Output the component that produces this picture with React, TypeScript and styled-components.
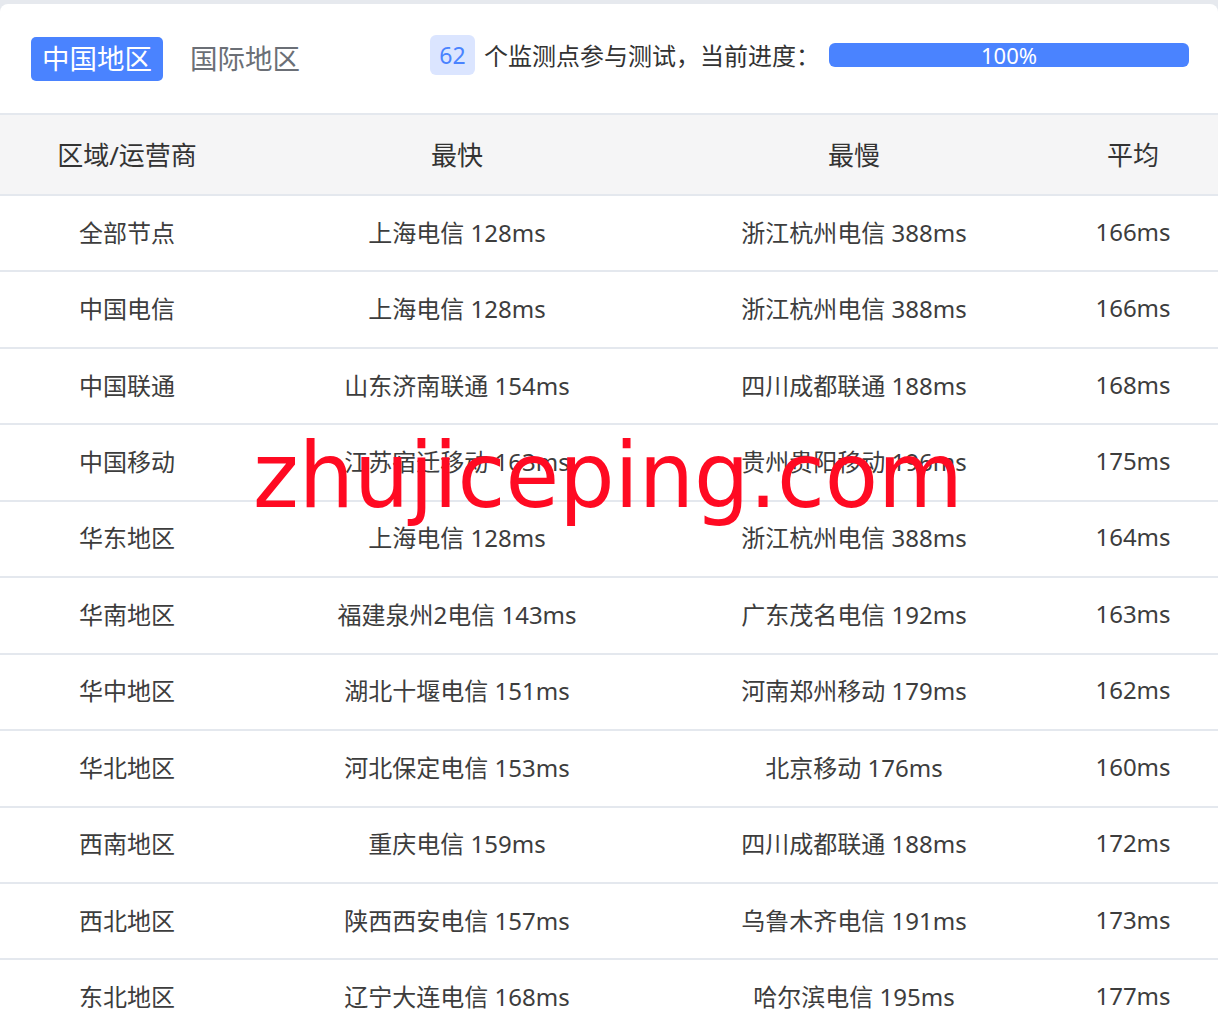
import React from "react";
import styled, { createGlobalStyle } from "styled-components";

const Global = createGlobalStyle`
  html, body { margin: 0; padding: 0; background: #e6e9ee; }
  body { font-family: "Noto Sans", "Noto Sans CJK SC", sans-serif; color: #333; }
`;

const Card = styled.div`
  position: relative;
  margin-top: 4px;
  background: #fff;
  border-radius: 8px 8px 0 0;
  overflow: hidden;
  height: 1027px;
`;

const TopBar = styled.div`
  display: flex;
  align-items: center;
  padding: 0 29px 0 31px;
  border-bottom: 2px solid #e4e8ee;
  box-sizing: border-box;
  height: 111px;
`;

const Tabs = styled.div`
  display: flex;
  align-items: center;
  gap: 16px;
`;

const Tab = styled.div<{ $active?: boolean }>`
  height: 44px;
  padding: 0 11px;
  border-radius: 5px;
  display: flex;
  align-items: center;
  font-size: 27.5px;
  line-height: 1;
  background: ${(p) => (p.$active ? "#4a83ff" : "transparent")};
  color: ${(p) => (p.$active ? "#fff" : "#6b6f76")};
`;

const Progress = styled.div`
  margin-left: auto;
  display: flex;
  align-items: center;
  margin-top: -8px;
`;

const Badge = styled.span`
  display: inline-flex;
  align-items: center;
  justify-content: center;
  width: 45px;
  height: 40px;
  border-radius: 6px;
  background: #dbe5ff;
  color: #4a83ff;
  font-size: 23px;
`;

const Label = styled.span`
  margin-left: 9px;
  font-size: 24px;
  color: #333;
  white-space: nowrap;
`;

const Bar = styled.div`
  margin-left: 9px;
  width: 360px;
  height: 24px;
  border-radius: 6px;
  background: #4a83ff;
  color: #fff;
  font-size: 22px;
  display: flex;
  align-items: center;
  justify-content: center;
  line-height: 1;
`;

const Row = styled.div<{ $head?: boolean }>`
  display: grid;
  grid-template-columns: 254px 406px 388px 1fr;
  align-items: center;
  height: ${(p) => (p.$head ? "81px" : "76.45px")};
  padding-bottom: ${(p) => (p.$head ? "2px" : "4px")};
  box-sizing: border-box;
  border-bottom: 2px solid #e4e8ee;
  background: ${(p) => (p.$head ? "#f5f5f6" : "#fff")};
  font-size: ${(p) => (p.$head ? "26px" : "24px")};
  color: ${(p) => (p.$head ? "#333" : "#3d3d3d")};
`;

const Cell = styled.div`
  text-align: center;
  white-space: nowrap;
`;

const Watermark = styled.svg`
  position: absolute;
  left: 253px;
  top: 418px;
  pointer-events: none;
`;

const rows: [string, string, string, string][] = [
  ["全部节点", "上海电信 128ms", "浙江杭州电信 388ms", "166ms"],
  ["中国电信", "上海电信 128ms", "浙江杭州电信 388ms", "166ms"],
  ["中国联通", "山东济南联通 154ms", "四川成都联通 188ms", "168ms"],
  ["中国移动", "江苏宿迁移动 163ms", "贵州贵阳移动 196ms", "175ms"],
  ["华东地区", "上海电信 128ms", "浙江杭州电信 388ms", "164ms"],
  ["华南地区", "福建泉州2电信 143ms", "广东茂名电信 192ms", "163ms"],
  ["华中地区", "湖北十堰电信 151ms", "河南郑州移动 179ms", "162ms"],
  ["华北地区", "河北保定电信 153ms", "北京移动 176ms", "160ms"],
  ["西南地区", "重庆电信 159ms", "四川成都联通 188ms", "172ms"],
  ["西北地区", "陕西西安电信 157ms", "乌鲁木齐电信 191ms", "173ms"],
  ["东北地区", "辽宁大连电信 168ms", "哈尔滨电信 195ms", "177ms"],
];

export default function App() {
  return (
    <>
      <Global />
      <Card>
        <TopBar>
          <Tabs>
            <Tab $active>中国地区</Tab>
            <Tab>国际地区</Tab>
          </Tabs>
          <Progress>
            <Badge>62</Badge>
            <Label>个监测点参与测试，当前进度：</Label>
            <Bar>100%</Bar>
          </Progress>
        </TopBar>
        <Row $head>
          <Cell>区域/运营商</Cell>
          <Cell>最快</Cell>
          <Cell>最慢</Cell>
          <Cell>平均</Cell>
        </Row>
        {rows.map((r, i) => (
          <Row key={i}>
            {r.map((c, j) => (
              <Cell key={j}>{c}</Cell>
            ))}
          </Row>
        ))}
        <Watermark width="712" height="110" viewBox="0 0 712 110">
          <text
            x="0"
            y="85"
            textLength="710"
            lengthAdjust="spacingAndGlyphs"
            fill="#ff0a22"
            fontFamily="'DejaVu Sans Condensed', 'DejaVu Sans', sans-serif"
            fontSize="90"
          >
            zhujiceping.com
          </text>
        </Watermark>
      </Card>
    </>
  );
}
